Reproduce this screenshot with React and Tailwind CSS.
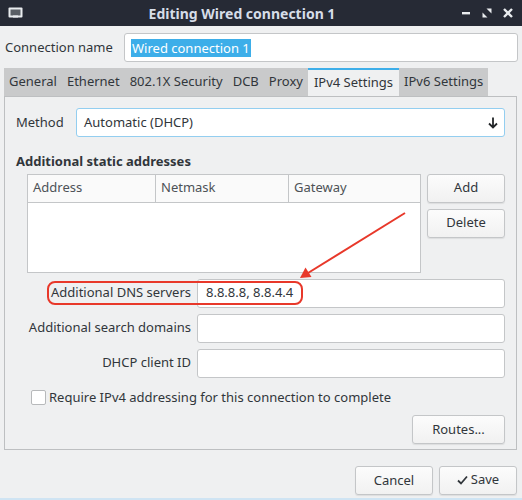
import React from 'react';

const font = { fontFamily: '"Noto Sans", "Open Sans", sans-serif' };

const Button = ({ children, className = '' }) => (
  <button
    className={`h-[29px] rounded-[3px] border border-[#c4c6c8] bg-gradient-to-b from-[#fcfcfc] to-[#f1f1f1] text-[13px] text-[#31363b] shadow-[0_1px_1px_rgba(0,0,0,0.08)] ${className}`}
  >
    {children}
  </button>
);

const Field = ({ label, value }) => (
  <div className="flex h-[29px] items-center">
    <div className="w-[181px] pr-[6px] text-right text-[13px] text-[#31363b]">{label}</div>
    <div className="flex h-full flex-1 items-center rounded-[3px] border border-[#c4c6c8] bg-white px-[8px] text-[13px] text-[#31363b]">
      {value}
    </div>
  </div>
);

const tabs = ['General', 'Ethernet', '802.1X Security', 'DCB', 'Proxy', 'IPv4 Settings', 'IPv6 Settings'];

export default function App() {
  return (
    <div style={font} className="relative flex h-[500px] w-[522px] flex-col overflow-hidden bg-[#eff0f1] text-[#31363b]">
      {/* Title bar */}
      <div className="flex h-[26px] shrink-0 items-center bg-[#262a35] px-[8px]">
        <svg width="15" height="12" viewBox="0 0 15 12" className="shrink-0">
          <rect x="0.5" y="0.5" width="14" height="10" rx="1" fill="#e9ecef" />
          <rect x="2.5" y="2.5" width="10" height="6" fill="#5a5f66" />
          <rect x="5" y="8.5" width="5" height="2" fill="#e9ecef" />
        </svg>
        <div className="flex-1 text-center text-[14px] font-bold text-[#d6dde8]">Editing Wired connection 1</div>
        <div className="flex items-center gap-[11px] pr-[1px] text-white">
          <svg width="10" height="10" viewBox="0 0 10 10"><rect x="1" y="4" width="8" height="2.4" fill="#e9ecef" /></svg>
          <svg width="10" height="10" viewBox="0 0 10 10">
            <path d="M4.5 0.5H9.5V5.5Z M0.5 4.5V9.5H5.5Z" fill="#e9ecef" />
          </svg>
          <svg width="10" height="10" viewBox="0 0 10 10">
            <path d="M1 1L9 9M9 1L1 9" stroke="#e9ecef" strokeWidth="2.4" />
          </svg>
        </div>
      </div>

      {/* Connection name */}
      <div className="mt-[7px] flex h-[29px] items-center pl-[5px] pr-[4px]">
        <div className="w-[119px] text-[13px]">Connection name</div>
        <div className="flex h-full flex-1 items-center rounded-[3px] border border-[#c4c6c8] bg-white px-[6px]">
          <span className="bg-[#3daee9] px-[1px] text-[13px] leading-[18px] text-white">Wired connection 1</span>
        </div>
      </div>

      {/* Tabs */}
      <div className="ml-[4px] mt-[6px] flex h-[28px] w-fit items-stretch bg-[#c9cacb] pl-[-1px]">
        {tabs.map((t) => (
          <div
            key={t}
            className={
              t === 'IPv4 Settings'
                ? 'flex items-center border-t-2 border-[#3daee9] bg-[#eff0f1] px-[6px] text-[13px]'
                : 'flex items-center px-[5px] text-[13px]'
            }
          >
            {t}
          </div>
        ))}
      </div>

      {/* Panel */}
      <div className="ml-[4px] mr-[5px] flex h-[354px] flex-col border border-[#bdbfc1] px-[11px] pt-[11px]">
        <div className="flex h-[29px] items-center">
          <div className="w-[60px] text-[13px]">Method</div>
          <div className="flex h-full flex-1 items-center justify-between rounded-[3px] border border-[#93cef0] bg-white pl-[7px] pr-[6px] text-[13px]">
            <span>Automatic (DHCP)</span>
            <svg width="10" height="12" viewBox="0 0 10 12">
              <path d="M5 0.5V10.5M1 6.5L5 10.5L9 6.5" stroke="#232629" strokeWidth="1.8" fill="none" />
            </svg>
          </div>
        </div>

        <div className="mt-[15px] text-[13px] font-bold">Additional static addresses</div>

        <div className="mt-[2px] flex gap-[6px] pl-[11px]">
          <div className="flex h-[99px] flex-1 flex-col border border-[#c4c6c8] bg-white">
            <div className="flex h-[28px] border-b border-[#c4c6c8] bg-[#fafafa] text-[13px] text-[#4d5257]">
              <div className="flex w-[128px] items-center border-r border-[#c4c6c8] px-[5px]">Address</div>
              <div className="flex w-[133px] items-center border-r border-[#c4c6c8] px-[5px]">Netmask</div>
              <div className="flex flex-1 items-center px-[5px]">Gateway</div>
            </div>
          </div>
          <div className="flex w-[78px] flex-col gap-[6px]">
            <Button>Add</Button>
            <Button>Delete</Button>
          </div>
        </div>

        <div className="mt-[6px] flex flex-col gap-[6px]">
          <Field label="Additional DNS servers" value="8.8.8.8, 8.8.4.4" />
          <Field label="Additional search domains" value="" />
          <Field label="DHCP client ID" value="" />
        </div>

        <div className="mt-[10px] flex items-center pl-[15px]">
          <div className="h-[15px] w-[15px] rounded-[2px] border border-[#b7b9bb] bg-white" />
          <span className="ml-[3px] text-[13px]">Require IPv4 addressing for this connection to complete</span>
        </div>

        <div className="mt-[8px] flex justify-end">
          <Button className="w-[93px]">Routes...</Button>
        </div>
      </div>

      {/* Footer */}
      <div className="mt-[16px] flex justify-end gap-[6px] pr-[5px]">
        <Button className="h-[28px] w-[78px]">Cancel</Button>
        <Button className="h-[28px] w-[78px]">
          <span className="inline-flex items-center gap-[3px]">
            <svg width="11" height="10" viewBox="0 0 11 10">
              <path d="M1 5.5L4 8.5L10 1.5" stroke="#31363b" strokeWidth="1.8" fill="none" />
            </svg>
            Save
          </span>
        </Button>
      </div>
      <div className="absolute bottom-0 left-0 right-0 h-[2px] bg-[#cfe4f3]" />

      {/* Annotation overlay */}
      <div className="pointer-events-none absolute left-[47px] top-[281px] h-[24px] w-[256px] rounded-[8px] border-2 border-[#e8382a]" />
      <svg className="pointer-events-none absolute left-0 top-0" width="522" height="500">
        <line x1="405" y1="213" x2="308" y2="273" stroke="#e8382a" strokeWidth="2" />
        <path d="M300 278L305.5 267.5L311.5 277Z" fill="#e8382a" />
      </svg>
    </div>
  );
}
